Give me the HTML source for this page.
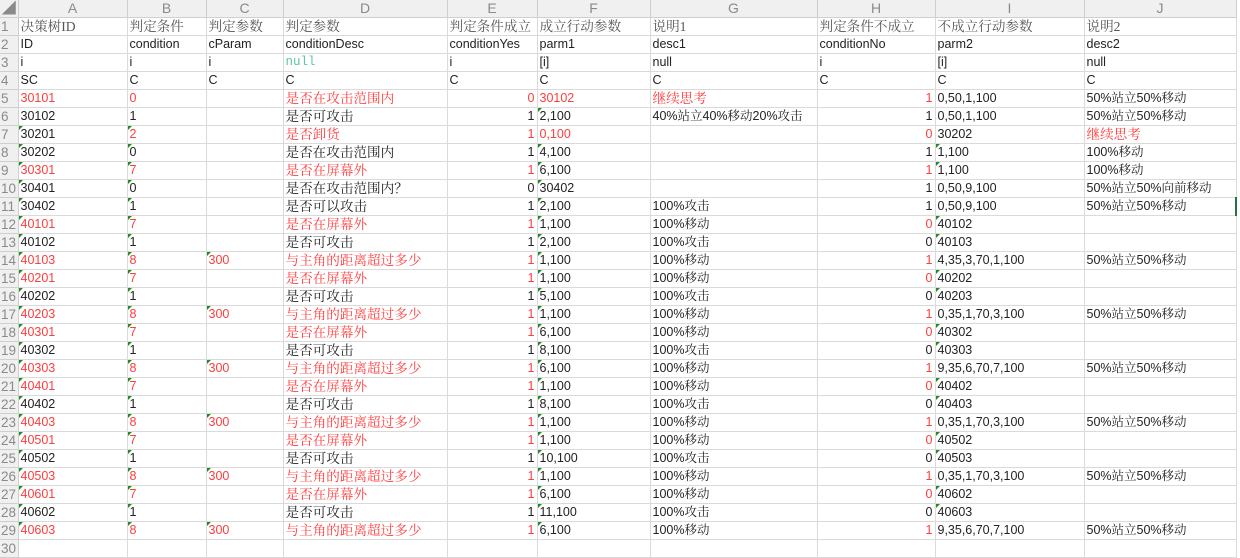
<!DOCTYPE html>
<html><head><meta charset="utf-8"><style>
*{margin:0;padding:0;box-sizing:border-box}
body{width:1240px;height:549px;overflow:hidden;background:#fff;font-family:"Liberation Sans","Noto Serif CJK SC",serif;font-size:12.5px;color:#222}
table{border-collapse:collapse;table-layout:fixed;width:1236px}
td{height:18px;border-right:1px solid #dadada;border-bottom:1px solid #dadada;padding:0 0 0 2px;white-space:nowrap;overflow:hidden;line-height:17px;vertical-align:bottom;position:relative}
tr.h td{height:17px;background:#f0f0f0;color:#8a8a8a;text-align:center;font-size:14px;border-color:#cfcfcf;vertical-align:middle;padding:0}
td.rn{background:#f0f0f0;color:#8a8a8a;font-size:13.5px;padding:0 0 0 1px;border-color:#cfcfcf}
.r{color:#ff3d3d}
.n{text-align:right;padding-right:2px}
.t::before{content:"";position:absolute;left:0;top:0;border-top:4px solid #1e8c1e;border-right:4px solid transparent}
.cj{font-family:"Liberation Serif","Noto Serif CJK SC",serif;font-size:13.6px}
.g{color:#555}
.nl{color:#5cc5a8;font-family:"Liberation Mono",monospace}
.sel{border-right:2px solid #217346}
</style></head><body>
<table>
<colgroup><col style="width:18px"><col style="width:109px"><col style="width:79px"><col style="width:77px"><col style="width:164px"><col style="width:90px"><col style="width:113px"><col style="width:167px"><col style="width:118px"><col style="width:149px"><col style="width:152px"></colgroup>
<tr class="h"><td>◢</td><td>A</td><td>B</td><td>C</td><td>D</td><td>E</td><td>F</td><td>G</td><td>H</td><td>I</td><td>J</td></tr>
<tr><td class="rn">1</td><td class="cj g">决策树ID</td><td class="cj g">判定条件</td><td class="cj g">判定参数</td><td class="cj g">判定参数</td><td class="cj g">判定条件成立</td><td class="cj g">成立行动参数</td><td class="cj g">说明1</td><td class="cj g">判定条件不成立</td><td class="cj g">不成立行动参数</td><td class="cj g">说明2</td></tr>
<tr><td class="rn">2</td><td>ID</td><td>condition</td><td>cParam</td><td>conditionDesc</td><td>conditionYes</td><td>parm1</td><td>desc1</td><td>conditionNo</td><td>parm2</td><td>desc2</td></tr>
<tr><td class="rn">3</td><td>i</td><td>i</td><td>i</td><td class="nl">null</td><td>i</td><td>[i]</td><td>null</td><td>i</td><td>[i]</td><td>null</td></tr>
<tr><td class="rn">4</td><td>SC</td><td>C</td><td>C</td><td>C</td><td>C</td><td>C</td><td>C</td><td>C</td><td>C</td><td>C</td></tr>
<tr><td class="rn">5</td><td class="r">30101</td><td class="r">0</td><td></td><td class="r cj">是否在攻击范围内</td><td class="r n">0</td><td class="r">30102</td><td class="r cj">继续思考</td><td class="r n">1</td><td>0,50,1,100</td><td>50%站立50%移动</td></tr>
<tr><td class="rn">6</td><td>30102</td><td>1</td><td></td><td class="cj">是否可攻击</td><td class="n">1</td><td class="t">2,100</td><td>40%站立40%移动20%攻击</td><td class="n">1</td><td>0,50,1,100</td><td>50%站立50%移动</td></tr>
<tr><td class="rn">7</td><td class="t">30201</td><td class="r t">2</td><td></td><td class="r cj">是否卸货</td><td class="r n">1</td><td class="r">0,100</td><td></td><td class="r n">0</td><td>30202</td><td class="r cj">继续思考</td></tr>
<tr><td class="rn">8</td><td class="t">30202</td><td class="t">0</td><td></td><td style="font-size:13.6px">是否在攻击范围内</td><td class="n">1</td><td class="t">4,100</td><td></td><td class="n">1</td><td class="t">1,100</td><td>100%移动</td></tr>
<tr><td class="rn">9</td><td class="r t">30301</td><td class="r t">7</td><td></td><td class="r cj">是否在屏幕外</td><td class="r n">1</td><td class="t">6,100</td><td></td><td class="r n">1</td><td class="t">1,100</td><td>100%移动</td></tr>
<tr><td class="rn">10</td><td class="t">30401</td><td class="t">0</td><td></td><td class="cj">是否在攻击范围内？</td><td class="n">0</td><td class="t">30402</td><td></td><td class="n">1</td><td>0,50,9,100</td><td>50%站立50%向前移动</td></tr>
<tr><td class="rn">11</td><td class="t">30402</td><td class="t">1</td><td></td><td class="cj">是否可以攻击</td><td class="n">1</td><td class="t">2,100</td><td>100%攻击</td><td class="n">1</td><td>0,50,9,100</td><td class="sel">50%站立50%移动</td></tr>
<tr><td class="rn">12</td><td class="r t">40101</td><td class="r t">7</td><td></td><td class="r cj">是否在屏幕外</td><td class="r n">1</td><td class="t">1,100</td><td>100%移动</td><td class="r n">0</td><td class="t">40102</td><td></td></tr>
<tr><td class="rn">13</td><td class="t">40102</td><td class="t">1</td><td></td><td class="cj">是否可攻击</td><td class="n">1</td><td class="t">2,100</td><td>100%攻击</td><td class="n">0</td><td class="t">40103</td><td></td></tr>
<tr><td class="rn">14</td><td class="r t">40103</td><td class="r t">8</td><td class="r t">300</td><td class="r cj">与主角的距离超过多少</td><td class="r n">1</td><td class="t">1,100</td><td>100%移动</td><td class="r n">1</td><td>4,35,3,70,1,100</td><td>50%站立50%移动</td></tr>
<tr><td class="rn">15</td><td class="r t">40201</td><td class="r t">7</td><td></td><td class="r cj">是否在屏幕外</td><td class="r n">1</td><td class="t">1,100</td><td>100%移动</td><td class="r n">0</td><td class="t">40202</td><td></td></tr>
<tr><td class="rn">16</td><td class="t">40202</td><td class="t">1</td><td></td><td class="cj">是否可攻击</td><td class="n">1</td><td class="t">5,100</td><td>100%攻击</td><td class="n">0</td><td class="t">40203</td><td></td></tr>
<tr><td class="rn">17</td><td class="r t">40203</td><td class="r t">8</td><td class="r t">300</td><td class="r cj">与主角的距离超过多少</td><td class="r n">1</td><td class="t">1,100</td><td>100%移动</td><td class="r n">1</td><td>0,35,1,70,3,100</td><td>50%站立50%移动</td></tr>
<tr><td class="rn">18</td><td class="r t">40301</td><td class="r t">7</td><td></td><td class="r cj">是否在屏幕外</td><td class="r n">1</td><td class="t">6,100</td><td>100%移动</td><td class="r n">0</td><td class="t">40302</td><td></td></tr>
<tr><td class="rn">19</td><td class="t">40302</td><td class="t">1</td><td></td><td class="cj">是否可攻击</td><td class="n">1</td><td class="t">8,100</td><td>100%攻击</td><td class="n">0</td><td class="t">40303</td><td></td></tr>
<tr><td class="rn">20</td><td class="r t">40303</td><td class="r t">8</td><td class="r t">300</td><td class="r cj">与主角的距离超过多少</td><td class="r n">1</td><td class="t">6,100</td><td>100%移动</td><td class="r n">1</td><td>9,35,6,70,7,100</td><td>50%站立50%移动</td></tr>
<tr><td class="rn">21</td><td class="r t">40401</td><td class="r t">7</td><td></td><td class="r cj">是否在屏幕外</td><td class="r n">1</td><td class="t">1,100</td><td>100%移动</td><td class="r n">0</td><td class="t">40402</td><td></td></tr>
<tr><td class="rn">22</td><td class="t">40402</td><td class="t">1</td><td></td><td class="cj">是否可攻击</td><td class="n">1</td><td class="t">8,100</td><td>100%攻击</td><td class="n">0</td><td class="t">40403</td><td></td></tr>
<tr><td class="rn">23</td><td class="r t">40403</td><td class="r t">8</td><td class="r t">300</td><td class="r cj">与主角的距离超过多少</td><td class="r n">1</td><td class="t">1,100</td><td>100%移动</td><td class="r n">1</td><td>0,35,1,70,3,100</td><td>50%站立50%移动</td></tr>
<tr><td class="rn">24</td><td class="r t">40501</td><td class="r t">7</td><td></td><td class="r cj">是否在屏幕外</td><td class="r n">1</td><td class="t">1,100</td><td>100%移动</td><td class="r n">0</td><td class="t">40502</td><td></td></tr>
<tr><td class="rn">25</td><td class="t">40502</td><td class="t">1</td><td></td><td class="cj">是否可攻击</td><td class="n">1</td><td class="t">10,100</td><td>100%攻击</td><td class="n">0</td><td class="t">40503</td><td></td></tr>
<tr><td class="rn">26</td><td class="r t">40503</td><td class="r t">8</td><td class="r t">300</td><td class="r cj">与主角的距离超过多少</td><td class="r n">1</td><td class="t">1,100</td><td>100%移动</td><td class="r n">1</td><td>0,35,1,70,3,100</td><td>50%站立50%移动</td></tr>
<tr><td class="rn">27</td><td class="r t">40601</td><td class="r t">7</td><td></td><td class="r cj">是否在屏幕外</td><td class="r n">1</td><td class="t">6,100</td><td>100%移动</td><td class="r n">0</td><td class="t">40602</td><td></td></tr>
<tr><td class="rn">28</td><td class="t">40602</td><td class="t">1</td><td></td><td class="cj">是否可攻击</td><td class="n">1</td><td class="t">11,100</td><td>100%攻击</td><td class="n">0</td><td class="t">40603</td><td></td></tr>
<tr><td class="rn">29</td><td class="r t">40603</td><td class="r t">8</td><td class="r t">300</td><td class="r cj">与主角的距离超过多少</td><td class="r n">1</td><td class="t">6,100</td><td>100%移动</td><td class="r n">1</td><td>9,35,6,70,7,100</td><td>50%站立50%移动</td></tr>
<tr><td class="rn">30</td><td></td><td></td><td></td><td></td><td></td><td></td><td></td><td></td><td></td><td></td></tr>
</table>
</body></html>
